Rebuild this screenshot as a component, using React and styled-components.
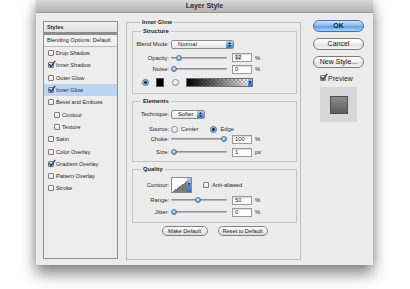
import styled, { createGlobalStyle } from 'styled-components';

const GlobalStyle = createGlobalStyle`
  html, body {
    margin: 0;
    padding: 0;
    background: #ffffff;
  }
  body {
    font-family: "Liberation Sans", Arial, sans-serif;
    color: #1e1e1e;
  }
`;

const Page = styled.div`
  width: 410px;
  height: 289px;
  overflow: hidden;
  padding-left: 36px;
  box-sizing: border-box;
`;

const Dialog = styled.section`
  width: 337px;
  height: 265px;
  background: #ececec;
  box-shadow: 0 9px 14px rgba(0, 0, 0, 0.45), 0 0 9px rgba(0, 0, 0, 0.18);
  display: flex;
  flex-direction: column;
`;

const TitleBar = styled.header`
  height: 13px;
  box-sizing: border-box;
  border-bottom: 1px solid #9a9a9a;
  background: linear-gradient(#d8d8d8, #b4b4b4);
  font-size: 7px;
  font-weight: bold;
  color: #2e2e2e;
  text-align: center;
  line-height: 12px;
`;

const Body = styled.div`
  display: flex;
  align-items: flex-start;
  padding: 8px 0 0 7px;
`;

/* ---------- styles list ---------- */

const StylesPanel = styled.nav`
  width: 75px;
  height: 238px;
  box-sizing: border-box;
  border: 1px solid #8f8f8f;
  background: #ededed;
  display: flex;
  flex-direction: column;
  font-size: 5.6px;
`;

const StylesHeader = styled.div`
  height: 10px;
  line-height: 10px;
  padding-left: 3px;
  font-weight: bold;
  border-bottom: 3px solid #8e8e8e;
  background: linear-gradient(#f2f2f2, #e2e2e2);
`;

const BlendingRow = styled.div`
  height: 11px;
  line-height: 11px;
  padding-left: 3px;
  border-bottom: 1px solid #b9b9b9;
  background: #f1f1f1;
`;

const StyleItem = styled.div`
  display: flex;
  align-items: center;
  gap: 2px;
  height: 12.3px;
  padding-left: ${(props) => (props.$indent ? 10 : 4)}px;
  background: ${(props) => (props.$selected ? '#bcd5f3' : 'transparent')};
`;

const CheckBox = styled.span`
  position: relative;
  flex: none;
  width: 6px;
  height: 6px;
  box-sizing: border-box;
  border: 1px solid #7b7b7b;
  border-radius: 1px;
  background: ${(props) => (props.$checked
    ? 'linear-gradient(#d5e6f8, #8db6e3)'
    : 'linear-gradient(#ffffff, #e6e6e6)')};

  svg {
    position: absolute;
    left: -1px;
    top: -3px;
  }
`;

function Check({ checked }) {
  return (
    <CheckBox $checked={checked}>
      {checked && (
        <svg width="8" height="8" viewBox="0 0 8 8">
          <path d="M1.2 4.2 L3 6.6 L7.2 0.8" fill="none" stroke="#1f3f6b" strokeWidth="1.3" />
        </svg>
      )}
    </CheckBox>
  );
}

/* ---------- main panel ---------- */

const Group = styled.div`
  box-sizing: border-box;
  border: 1px solid ${(props) => (props.$outer ? '#bdbdbd' : '#c4c4c4')};
  height: ${(props) => props.$h}px;
  width: ${(props) => (props.$outer ? '175px' : 'auto')};
  margin-left: ${(props) => (props.$outer ? '8px' : '0')};
  margin-top: ${(props) => props.$mt || 0}px;
  padding: ${(props) => (props.$outer ? '0 3px 0 5px' : '0')};
  display: flex;
  flex-direction: column;
  font-size: 5.8px;
`;

const GroupTitle = styled.div`
  align-self: flex-start;
  margin: -4px 0 0 8px;
  padding: 0 2px;
  height: 7px;
  line-height: 7px;
  background: #ececec;
  font-weight: bold;
`;

const Row = styled.div`
  display: flex;
  align-items: center;
  height: ${(props) => props.$h || 10}px;
  margin-top: ${(props) => props.$mt || 0}px;
  padding-left: ${(props) => props.$pl || 0}px;
`;

const Label = styled.span`
  flex: none;
  width: 36px;
  margin-right: 2px;
  text-align: right;
`;

const Select = styled.div`
  display: flex;
  align-items: center;
  width: ${(props) => props.$w}px;
  height: 9px;
  box-sizing: border-box;
  border: 1px solid #8a8a8a;
  border-radius: 2px;
  background: linear-gradient(#ffffff, #e3e3e3);
  overflow: hidden;

  span {
    flex: 1;
    padding-left: 6px;
  }
`;

const Stepper = styled.i`
  width: 7px;
  height: 100%;
  background: linear-gradient(#b4d3f3, #3c7ccd);
  display: flex;
  align-items: center;
  justify-content: center;
`;

function DropDown({ width, value }) {
  return (
    <Select $w={width}>
      <span>{value}</span>
      <Stepper>
        <svg width="3" height="5" viewBox="0 0 3 5">
          <path d="M0 2 L1.5 0 L3 2 Z M0 3 L1.5 5 L3 3 Z" fill="#10284a" />
        </svg>
      </Stepper>
    </Select>
  );
}

const Track = styled.div`
  position: relative;
  flex: none;
  width: 56px;
  height: 8px;

  &::before {
    content: '';
    position: absolute;
    left: 0;
    right: 0;
    top: 3px;
    height: 2px;
    background: linear-gradient(#7e7e7e, #c8c8c8);
    border-radius: 1px;
  }
`;

const Thumb = styled.span`
  position: absolute;
  top: 1px;
  left: calc(${(props) => props.$pos} * (100% - 6px));
  width: 6px;
  height: 6px;
  box-sizing: border-box;
  border-radius: 50%;
  border: 1px solid #4f76a3;
  background: radial-gradient(circle at 40% 35%, #e4f0fb, #6c9fd8 70%);
`;

function Slider({ pos }) {
  return (
    <Track>
      <Thumb $pos={pos} />
    </Track>
  );
}

const Field = styled.span`
  flex: none;
  width: 20px;
  height: 9px;
  margin-left: 5px;
  box-sizing: border-box;
  border: 1px solid #9a9a9a;
  background: #ffffff;
  box-shadow: inset 0 1px 1px rgba(0, 0, 0, 0.15);
  padding-left: 2px;
  line-height: 7px;

  mark {
    background: #b3d3f8;
    color: inherit;
  }
`;

const Unit = styled.span`
  margin-left: 3px;
`;

const Radio = styled.span`
  flex: none;
  width: 7px;
  height: 7px;
  box-sizing: border-box;
  border-radius: 50%;
  border: 1px solid ${(props) => (props.$on ? '#3c6ea8' : '#888888')};
  background: ${(props) => (props.$on
    ? 'radial-gradient(circle, #10233d 0 1.2px, #7fb0e6 1.6px, #c7def6)'
    : 'linear-gradient(#ffffff, #e2e2e2)')};
  margin-left: ${(props) => props.$ml || 0}px;
`;

const ColorSwatch = styled.span`
  flex: none;
  width: 8px;
  height: 9px;
  margin-left: 7px;
  box-sizing: border-box;
  border: 1px solid #555555;
  background: #000000;
`;

const GradientBar = styled.span`
  flex: none;
  display: flex;
  justify-content: flex-end;
  width: 67px;
  height: 9px;
  margin-left: 7px;
  box-sizing: border-box;
  border: 1px solid #6d6d6d;
  background:
    linear-gradient(to right, #000000, rgba(255, 255, 255, 0)),
    repeating-conic-gradient(#c9c9c9 0 25%, #ffffff 0 50%) 0 0 / 4px 4px;
`;

const GradientArrow = styled.i`
  width: 4px;
  height: 100%;
  background: linear-gradient(#9cc4ef, #3573c4);
  display: flex;
  align-items: center;
  justify-content: center;
`;

const RadioText = styled.span`
  margin-left: 3px;
`;

const ContourSwatch = styled.span`
  flex: none;
  display: flex;
  justify-content: flex-end;
  width: 21px;
  height: 16px;
  box-sizing: border-box;
  border: 1px solid #8a8a8a;
  background: linear-gradient(to bottom right, #ffffff 50%, #7b7b7b 50%);
`;

const ContourArrow = styled.i`
  width: 4px;
  height: 100%;
  background: linear-gradient(#a6cbf1, #2f6fc2);
  display: flex;
  align-items: center;
  justify-content: center;
`;

const CheckLabel = styled.label`
  display: flex;
  align-items: center;
  gap: 3px;
  margin-left: ${(props) => props.$ml || 0}px;
`;

const ButtonRow = styled.div`
  display: flex;
  justify-content: center;
  gap: 10px;
  margin-top: 3px;
`;

const SmallButton = styled.button`
  width: ${(props) => props.$w}px;
  height: 10px;
  padding: 0;
  box-sizing: border-box;
  border: 1px solid #7f7f7f;
  border-radius: 5px;
  background: linear-gradient(#ffffff, #dcdcdc);
  font-family: inherit;
  font-size: 5.6px;
  color: #1e1e1e;
  line-height: 8px;
`;

/* ---------- right column ---------- */

const Side = styled.aside`
  display: flex;
  flex-direction: column;
  gap: 6px;
  width: 51px;
  margin: -1px 0 0 12px;
`;

const PillButton = styled.button`
  height: 12px;
  padding: 0;
  box-sizing: border-box;
  border: 1px solid ${(props) => (props.$primary ? '#4a72a6' : '#7a7a7a')};
  border-radius: 6px;
  background: ${(props) => (props.$primary
    ? 'linear-gradient(#cde4fa, #7fb6ee 50%, #5d9fe6 52%, #a6d2fa)'
    : 'linear-gradient(#ffffff, #f0f0f0 50%, #e0e0e0 52%, #f4f4f4)')};
  font-family: inherit;
  font-size: 7px;
  font-weight: ${(props) => (props.$primary ? 'bold' : 'normal')};
  color: #1b1b1b;
  line-height: 10px;
`;

const PreviewLabel = styled.label`
  display: flex;
  align-items: center;
  gap: 2px;
  margin: 0 0 0 7px;
  font-size: 7px;
  height: 8px;
`;

const PreviewBox = styled.div`
  display: flex;
  align-items: center;
  justify-content: center;
  width: 37px;
  height: 35px;
  margin: -1px 0 0 7px;
  background: #d7d7d7;
`;

const PreviewSquare = styled.span`
  width: 18px;
  height: 18px;
  box-sizing: border-box;
  border: 1px solid #4e4e4e;
  background: linear-gradient(#8c8c8c, #5c5c5c);
`;

const styleItems = [
  { name: 'Drop Shadow' },
  { name: 'Inner Shadow', checked: true },
  { name: 'Outer Glow' },
  { name: 'Inner Glow', checked: true, selected: true },
  { name: 'Bevel and Emboss' },
  { name: 'Contour', indent: true },
  { name: 'Texture', indent: true },
  { name: 'Satin' },
  { name: 'Color Overlay' },
  { name: 'Gradient Overlay', checked: true },
  { name: 'Pattern Overlay' },
  { name: 'Stroke' },
];

const tinyArrow = (
  <svg width="2" height="4" viewBox="0 0 2 4">
    <path d="M0 0 L2 0 L1 4 Z" fill="#0e2a52" />
  </svg>
);

export default function App() {
  return (
    <Page>
      <GlobalStyle />
      <Dialog>
        <TitleBar>Layer Style</TitleBar>
        <Body>
          <StylesPanel>
            <StylesHeader>Styles</StylesHeader>
            <BlendingRow>Blending Options: Default</BlendingRow>
            {styleItems.map((item) => (
              <StyleItem key={item.name} $indent={item.indent} $selected={item.selected}>
                <Check checked={item.checked} />
                <span>{item.name}</span>
              </StyleItem>
            ))}
          </StylesPanel>

          <Group $outer $h={238} $mt={1}>
            <GroupTitle>Inner Glow</GroupTitle>

            <Group $h={63} $mt={5}>
              <GroupTitle>Structure</GroupTitle>
              <Row $mt={4}>
                <Label>Blend Mode:</Label>
                <DropDown width={63} value="Normal" />
              </Row>
              <Row $mt={3.5}>
                <Label>Opacity:</Label>
                <Slider pos={0.1} />
                <Field><mark>12</mark></Field>
                <Unit>%</Unit>
              </Row>
              <Row $mt={1.5}>
                <Label>Noise:</Label>
                <Slider pos={0} />
                <Field>0</Field>
                <Unit>%</Unit>
              </Row>
              <Row $mt={3.5} $pl={9}>
                <Radio $on />
                <ColorSwatch />
                <Radio $ml={8} />
                <GradientBar>
                  <GradientArrow>{tinyArrow}</GradientArrow>
                </GradientBar>
              </Row>
            </Group>

            <Group $h={61} $mt={7}>
              <GroupTitle>Elements</GroupTitle>
              <Row $mt={4}>
                <Label>Technique:</Label>
                <DropDown width={34} value="Softer" />
              </Row>
              <Row $mt={5}>
                <Label>Source:</Label>
                <Radio />
                <RadioText>Center</RadioText>
                <Radio $on $ml={12} />
                <RadioText>Edge</RadioText>
              </Row>
              <Row>
                <Label>Choke:</Label>
                <Slider pos={1} />
                <Field>100</Field>
                <Unit>%</Unit>
              </Row>
              <Row $mt={3}>
                <Label>Size:</Label>
                <Slider pos={0} />
                <Field>1</Field>
                <Unit>px</Unit>
              </Row>
            </Group>

            <Group $h={54} $mt={7}>
              <GroupTitle>Quality</GroupTitle>
              <Row $h={16} $mt={4}>
                <Label>Contour:</Label>
                <ContourSwatch>
                  <ContourArrow>{tinyArrow}</ContourArrow>
                </ContourSwatch>
                <CheckLabel $ml={11}>
                  <Check />
                  Anti-aliased
                </CheckLabel>
              </Row>
              <Row $mt={2}>
                <Label>Range:</Label>
                <Slider pos={0.48} />
                <Field>50</Field>
                <Unit>%</Unit>
              </Row>
              <Row $mt={2}>
                <Label>Jitter:</Label>
                <Slider pos={0} />
                <Field>0</Field>
                <Unit>%</Unit>
              </Row>
            </Group>

            <ButtonRow>
              <SmallButton type="button" $w={46}>Make Default</SmallButton>
              <SmallButton type="button" $w={50}>Reset to Default</SmallButton>
            </ButtonRow>
          </Group>

          <Side>
            <PillButton type="button" $primary>OK</PillButton>
            <PillButton type="button">Cancel</PillButton>
            <PillButton type="button">New Style...</PillButton>
            <PreviewLabel>
              <Check checked />
              Preview
            </PreviewLabel>
            <PreviewBox>
              <PreviewSquare />
            </PreviewBox>
          </Side>
        </Body>
      </Dialog>
    </Page>
  );
}
